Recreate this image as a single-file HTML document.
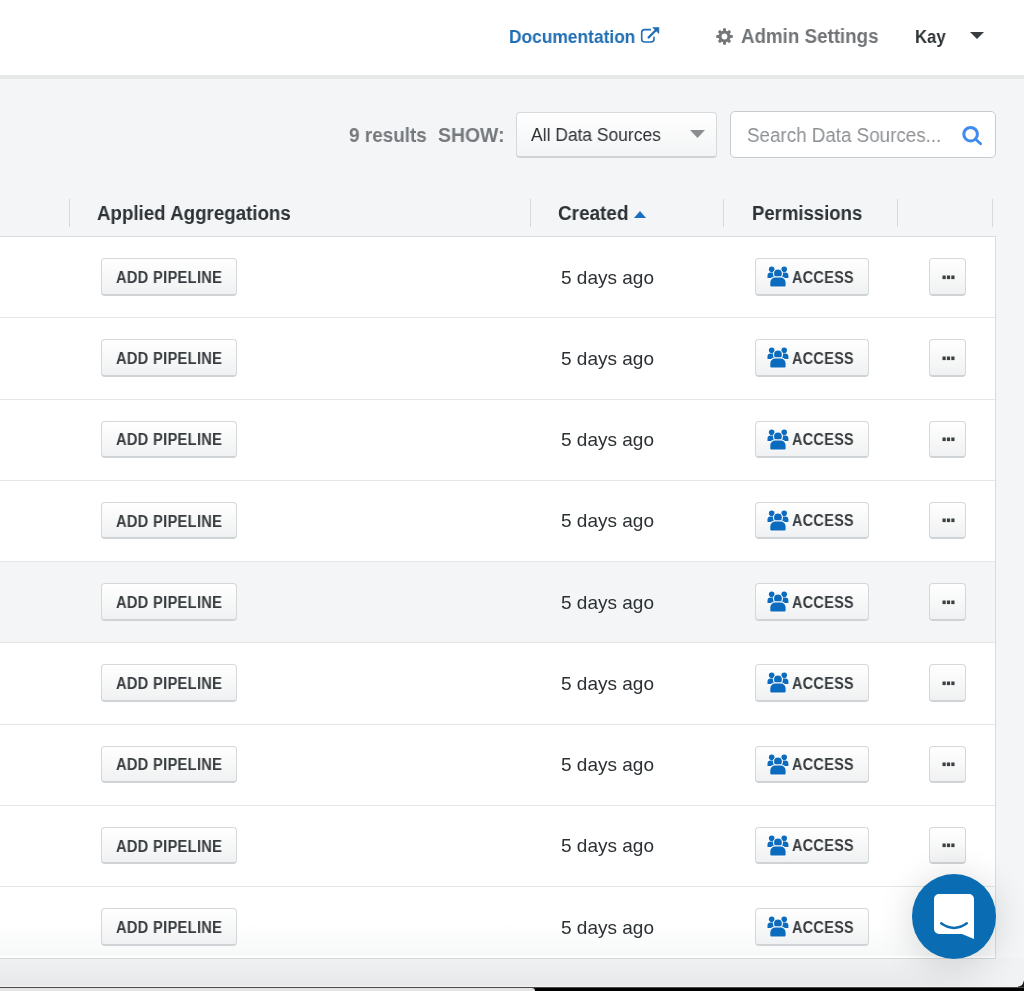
<!DOCTYPE html>
<html><head><meta charset="utf-8">
<style>
*{box-sizing:border-box;margin:0;padding:0}
html,body{width:1024px;height:991px;overflow:hidden}
body{background:#f4f5f7;font-family:"Liberation Sans",sans-serif;position:relative;color:#2c3134}
.a{position:absolute;white-space:nowrap}
#hdr{position:absolute;left:0;top:0;width:1024px;height:75px;background:#fff}
#hdrb{position:absolute;left:0;top:75px;width:1024px;height:4px;background:#e6e8e7}
.t{position:absolute;white-space:nowrap;line-height:20px;transform-origin:0 0;will-change:transform}
.sep{position:absolute;top:199px;width:1px;height:28px;background:#d7dadb}
#tbl{overflow:hidden;position:absolute;left:0;top:236px;width:996px;height:722px;background:#fff;border-top:1px solid #d9dcdd;border-right:1px solid #d9dcdd}
.row{position:absolute;left:0;width:995px;height:81.25px;border-top:1px solid #e5e7e6}
.row.h{background:#f4f5f7}
.btn{position:absolute;height:37.5px;border:1px solid #d4d8da;border-bottom:2px solid #cfd3d5;border-radius:4px;background:linear-gradient(#fff,#f0f1f2);font-weight:700;font-size:15px;color:#363b3e}
.btn span{position:absolute;white-space:nowrap;line-height:15px}
</style></head><body>
<div id="hdr"></div><div id="hdrb"></div>

<!-- nav -->
<div class="t" style="left:508.56px;top:26.9px;font-size:18.4px;font-weight:700;color:#1f6db3;transform:scaleX(0.9439);">Documentation</div>
<svg class="a" style="left:639px;top:26px" width="22" height="20" viewBox="0 0 22 20">
  <path d="M11.9 3.6H5.7a3 3 0 0 0-3 3v6.45a3 3 0 0 0 3 3H12a3 3 0 0 0 3-3V10.8" fill="none" stroke="#1f6db3" stroke-width="1.6"/>
  <path d="M9.6 11.5L17.3 3.8" fill="none" stroke="#1f6db3" stroke-width="2.3" stroke-linecap="round"/>
  <path d="M13.7 1.6h6.2v5.9z" fill="#1f6db3" stroke="#1f6db3" stroke-width="0.6" stroke-linejoin="round"/>
</svg>
<svg class="a" style="left:715.3px;top:27px" width="19" height="19" viewBox="-9.5 -9.5 19 19">
  <g fill="#75787b">
    <circle r="6.1"/>
    <rect x="-1.5" y="-8.3" width="3" height="16.6" rx="0.7"/>
    <rect x="-1.5" y="-8" width="3" height="16" rx="0.7" transform="rotate(45)"/>
    <rect x="-1.5" y="-8.3" width="3" height="16.6" rx="0.7" transform="rotate(90)"/>
    <rect x="-1.5" y="-8" width="3" height="16" rx="0.7" transform="rotate(135)"/>
  </g>
  <circle r="2.9" fill="#fff"/>
</svg>
<div class="t" style="left:740.73px;top:26.0px;font-size:19.4px;font-weight:700;color:#707477;transform:scaleX(0.9667);">Admin Settings</div>
<div class="t" style="left:915.08px;top:26.75px;font-size:18.1px;font-weight:700;color:#2c3134;transform:scaleX(0.9219);">Kay</div>
<svg class="a" style="left:969.5px;top:32px" width="14" height="7" viewBox="0 0 14 7"><path d="M0 0h14L7 7z" fill="#383d41"/></svg>

<!-- toolbar -->
<div class="t" style="left:348.74px;top:124.9px;font-size:19.8px;font-weight:700;color:#75797c;transform:scaleX(0.9562);">9 results</div>
<div class="t" style="left:437.82px;top:124.9px;font-size:19.8px;font-weight:700;color:#75797c;transform:scaleX(0.9815);">SHOW:</div>
<div class="a" style="left:516px;top:112px;width:201px;height:46px;border:1px solid #d6d9db;border-bottom:2px solid #cfd3d5;border-radius:4px;background:linear-gradient(#fff,#f3f4f5)"></div>
<div class="t" style="left:531.2px;top:124.9px;font-size:17.6px;font-weight:400;color:#2c3134;transform:scaleX(0.9908);">All Data Sources</div>
<svg class="a" style="left:690px;top:130px" width="15" height="8" viewBox="0 0 15 8"><path d="M0 0h15L7.5 8z" fill="#8b8e91"/></svg>
<div class="a" style="left:730px;top:111px;width:266px;height:47px;border:1px solid #c9ccce;border-radius:5px;background:#fff"></div>
<div class="t" style="left:746.84px;top:124.8px;font-size:19.6px;font-weight:400;color:#8e9194;transform:scaleX(0.959);">Search Data Sources...</div>
<svg class="a" style="left:961px;top:124px" width="24" height="24" viewBox="0 0 24 24">
  <circle cx="9.6" cy="10.2" r="6.8" fill="none" stroke="#3f8cee" stroke-width="3"/>
  <path d="M14.4 15L19.6 19.8" stroke="#3f8cee" stroke-width="2.8" stroke-linecap="round"/>
</svg>

<!-- table header -->
<div class="sep" style="left:69px"></div>
<div class="sep" style="left:530px"></div>
<div class="sep" style="left:723px"></div>
<div class="sep" style="left:897px"></div>
<div class="sep" style="left:992px"></div>
<div class="t" style="left:97.24px;top:203.2px;font-size:19.5px;font-weight:700;color:#2c3134;transform:scaleX(0.96);">Applied Aggregations</div>
<div class="t" style="left:558.33px;top:203.3px;font-size:19.5px;font-weight:700;color:#2c3134;transform:scaleX(0.9704);">Created</div>
<svg class="a" style="left:634px;top:211px" width="12" height="7" viewBox="0 0 12 7"><path d="M0 7h12L6 0z" fill="#1a6fc0"/></svg>
<div class="t" style="left:751.85px;top:203.3px;font-size:19.5px;font-weight:700;color:#2c3134;transform:scaleX(0.95);">Permissions</div>

<div id="tbl">
<div class="row" style="top:0px;border-top:none;">
<div class="btn" style="left:101px;top:21px;width:136px"></div>
<div class="t" style="left:116.0px;top:30.8px;font-size:15.6px;letter-spacing:0.3px;font-weight:700;color:#373c3f;transform:scaleX(0.942);">ADD PIPELINE</div>
<div class="t" style="left:561.3px;top:30.7px;font-size:19.0px;font-weight:400;color:#2b3033;transform:scaleX(0.9978);">5 days ago</div>
<div class="btn" style="left:755px;top:21px;width:114px"><svg class="a" style="left:11px;top:7px" width="23" height="22" viewBox="0 0 23 22">
<g fill="#0b6bbf">
<circle cx="4.7" cy="3.3" r="2.8"/><circle cx="17.2" cy="3.3" r="2.8"/>
<path d="M0.5 12.1V9.6c0-1.9 1.2-3.1 3-3.1h2.8c1.8 0 3 1.2 3 3.1v2.5z"/>
<path d="M21.4 12.1V9.6c0-1.9-1.2-3.1-3-3.1h-2.8c-1.8 0-3 1.2-3 3.1v2.5z"/>
</g>
<g fill="#0b6bbf" stroke="#f9f9fa" stroke-width="1.2">
<circle cx="10.95" cy="7.5" r="4.5"/>
<path d="M2.7 19.6V16.5a5.5 5.6 0 0 1 5.5-5.6h5.5a5.5 5.6 0 0 1 5.5 5.6v3.1a1.5 1.5 0 0 1-1.5 1.5H4.2a1.5 1.5 0 0 1-1.5-1.5z"/>
</g></svg></div>
<div class="t" style="left:791.6px;top:30.6px;font-size:15.6px;letter-spacing:0.3px;font-weight:700;color:#373c3f;transform:scaleX(0.9273);">ACCESS</div>
<div class="btn" style="left:929px;top:21px;width:37px"><svg class="a" style="left:11.5px;top:15.5px" width="13" height="5" viewBox="0 0 13 5"><g fill="#3a3f42"><rect x="0.5" y="0.5" width="3.2" height="3.6"/><rect x="4.9" y="0.5" width="3.2" height="3.6"/><rect x="9.3" y="0.5" width="3.2" height="3.6"/></g></svg></div>
</div>
<div class="row" style="top:80.25px;">
<div class="btn" style="left:101px;top:21px;width:136px"></div>
<div class="t" style="left:116.0px;top:30.8px;font-size:15.6px;letter-spacing:0.3px;font-weight:700;color:#373c3f;transform:scaleX(0.942);">ADD PIPELINE</div>
<div class="t" style="left:561.3px;top:30.7px;font-size:19.0px;font-weight:400;color:#2b3033;transform:scaleX(0.9978);">5 days ago</div>
<div class="btn" style="left:755px;top:21px;width:114px"><svg class="a" style="left:11px;top:7px" width="23" height="22" viewBox="0 0 23 22">
<g fill="#0b6bbf">
<circle cx="4.7" cy="3.3" r="2.8"/><circle cx="17.2" cy="3.3" r="2.8"/>
<path d="M0.5 12.1V9.6c0-1.9 1.2-3.1 3-3.1h2.8c1.8 0 3 1.2 3 3.1v2.5z"/>
<path d="M21.4 12.1V9.6c0-1.9-1.2-3.1-3-3.1h-2.8c-1.8 0-3 1.2-3 3.1v2.5z"/>
</g>
<g fill="#0b6bbf" stroke="#f9f9fa" stroke-width="1.2">
<circle cx="10.95" cy="7.5" r="4.5"/>
<path d="M2.7 19.6V16.5a5.5 5.6 0 0 1 5.5-5.6h5.5a5.5 5.6 0 0 1 5.5 5.6v3.1a1.5 1.5 0 0 1-1.5 1.5H4.2a1.5 1.5 0 0 1-1.5-1.5z"/>
</g></svg></div>
<div class="t" style="left:791.6px;top:30.6px;font-size:15.6px;letter-spacing:0.3px;font-weight:700;color:#373c3f;transform:scaleX(0.9273);">ACCESS</div>
<div class="btn" style="left:929px;top:21px;width:37px"><svg class="a" style="left:11.5px;top:15.5px" width="13" height="5" viewBox="0 0 13 5"><g fill="#3a3f42"><rect x="0.5" y="0.5" width="3.2" height="3.6"/><rect x="4.9" y="0.5" width="3.2" height="3.6"/><rect x="9.3" y="0.5" width="3.2" height="3.6"/></g></svg></div>
</div>
<div class="row" style="top:161.5px;">
<div class="btn" style="left:101px;top:21px;width:136px"></div>
<div class="t" style="left:116.0px;top:30.8px;font-size:15.6px;letter-spacing:0.3px;font-weight:700;color:#373c3f;transform:scaleX(0.942);">ADD PIPELINE</div>
<div class="t" style="left:561.3px;top:30.7px;font-size:19.0px;font-weight:400;color:#2b3033;transform:scaleX(0.9978);">5 days ago</div>
<div class="btn" style="left:755px;top:21px;width:114px"><svg class="a" style="left:11px;top:7px" width="23" height="22" viewBox="0 0 23 22">
<g fill="#0b6bbf">
<circle cx="4.7" cy="3.3" r="2.8"/><circle cx="17.2" cy="3.3" r="2.8"/>
<path d="M0.5 12.1V9.6c0-1.9 1.2-3.1 3-3.1h2.8c1.8 0 3 1.2 3 3.1v2.5z"/>
<path d="M21.4 12.1V9.6c0-1.9-1.2-3.1-3-3.1h-2.8c-1.8 0-3 1.2-3 3.1v2.5z"/>
</g>
<g fill="#0b6bbf" stroke="#f9f9fa" stroke-width="1.2">
<circle cx="10.95" cy="7.5" r="4.5"/>
<path d="M2.7 19.6V16.5a5.5 5.6 0 0 1 5.5-5.6h5.5a5.5 5.6 0 0 1 5.5 5.6v3.1a1.5 1.5 0 0 1-1.5 1.5H4.2a1.5 1.5 0 0 1-1.5-1.5z"/>
</g></svg></div>
<div class="t" style="left:791.6px;top:30.6px;font-size:15.6px;letter-spacing:0.3px;font-weight:700;color:#373c3f;transform:scaleX(0.9273);">ACCESS</div>
<div class="btn" style="left:929px;top:21px;width:37px"><svg class="a" style="left:11.5px;top:15.5px" width="13" height="5" viewBox="0 0 13 5"><g fill="#3a3f42"><rect x="0.5" y="0.5" width="3.2" height="3.6"/><rect x="4.9" y="0.5" width="3.2" height="3.6"/><rect x="9.3" y="0.5" width="3.2" height="3.6"/></g></svg></div>
</div>
<div class="row" style="top:242.75px;">
<div class="btn" style="left:101px;top:21px;width:136px"></div>
<div class="t" style="left:116.0px;top:30.8px;font-size:15.6px;letter-spacing:0.3px;font-weight:700;color:#373c3f;transform:scaleX(0.942);">ADD PIPELINE</div>
<div class="t" style="left:561.3px;top:30.7px;font-size:19.0px;font-weight:400;color:#2b3033;transform:scaleX(0.9978);">5 days ago</div>
<div class="btn" style="left:755px;top:21px;width:114px"><svg class="a" style="left:11px;top:7px" width="23" height="22" viewBox="0 0 23 22">
<g fill="#0b6bbf">
<circle cx="4.7" cy="3.3" r="2.8"/><circle cx="17.2" cy="3.3" r="2.8"/>
<path d="M0.5 12.1V9.6c0-1.9 1.2-3.1 3-3.1h2.8c1.8 0 3 1.2 3 3.1v2.5z"/>
<path d="M21.4 12.1V9.6c0-1.9-1.2-3.1-3-3.1h-2.8c-1.8 0-3 1.2-3 3.1v2.5z"/>
</g>
<g fill="#0b6bbf" stroke="#f9f9fa" stroke-width="1.2">
<circle cx="10.95" cy="7.5" r="4.5"/>
<path d="M2.7 19.6V16.5a5.5 5.6 0 0 1 5.5-5.6h5.5a5.5 5.6 0 0 1 5.5 5.6v3.1a1.5 1.5 0 0 1-1.5 1.5H4.2a1.5 1.5 0 0 1-1.5-1.5z"/>
</g></svg></div>
<div class="t" style="left:791.6px;top:30.6px;font-size:15.6px;letter-spacing:0.3px;font-weight:700;color:#373c3f;transform:scaleX(0.9273);">ACCESS</div>
<div class="btn" style="left:929px;top:21px;width:37px"><svg class="a" style="left:11.5px;top:15.5px" width="13" height="5" viewBox="0 0 13 5"><g fill="#3a3f42"><rect x="0.5" y="0.5" width="3.2" height="3.6"/><rect x="4.9" y="0.5" width="3.2" height="3.6"/><rect x="9.3" y="0.5" width="3.2" height="3.6"/></g></svg></div>
</div>
<div class="row h" style="top:324.0px;">
<div class="btn" style="left:101px;top:21px;width:136px"></div>
<div class="t" style="left:116.0px;top:30.8px;font-size:15.6px;letter-spacing:0.3px;font-weight:700;color:#373c3f;transform:scaleX(0.942);">ADD PIPELINE</div>
<div class="t" style="left:561.3px;top:30.7px;font-size:19.0px;font-weight:400;color:#2b3033;transform:scaleX(0.9978);">5 days ago</div>
<div class="btn" style="left:755px;top:21px;width:114px"><svg class="a" style="left:11px;top:7px" width="23" height="22" viewBox="0 0 23 22">
<g fill="#0b6bbf">
<circle cx="4.7" cy="3.3" r="2.8"/><circle cx="17.2" cy="3.3" r="2.8"/>
<path d="M0.5 12.1V9.6c0-1.9 1.2-3.1 3-3.1h2.8c1.8 0 3 1.2 3 3.1v2.5z"/>
<path d="M21.4 12.1V9.6c0-1.9-1.2-3.1-3-3.1h-2.8c-1.8 0-3 1.2-3 3.1v2.5z"/>
</g>
<g fill="#0b6bbf" stroke="#f9f9fa" stroke-width="1.2">
<circle cx="10.95" cy="7.5" r="4.5"/>
<path d="M2.7 19.6V16.5a5.5 5.6 0 0 1 5.5-5.6h5.5a5.5 5.6 0 0 1 5.5 5.6v3.1a1.5 1.5 0 0 1-1.5 1.5H4.2a1.5 1.5 0 0 1-1.5-1.5z"/>
</g></svg></div>
<div class="t" style="left:791.6px;top:30.6px;font-size:15.6px;letter-spacing:0.3px;font-weight:700;color:#373c3f;transform:scaleX(0.9273);">ACCESS</div>
<div class="btn" style="left:929px;top:21px;width:37px"><svg class="a" style="left:11.5px;top:15.5px" width="13" height="5" viewBox="0 0 13 5"><g fill="#3a3f42"><rect x="0.5" y="0.5" width="3.2" height="3.6"/><rect x="4.9" y="0.5" width="3.2" height="3.6"/><rect x="9.3" y="0.5" width="3.2" height="3.6"/></g></svg></div>
</div>
<div class="row" style="top:405.25px;">
<div class="btn" style="left:101px;top:21px;width:136px"></div>
<div class="t" style="left:116.0px;top:30.8px;font-size:15.6px;letter-spacing:0.3px;font-weight:700;color:#373c3f;transform:scaleX(0.942);">ADD PIPELINE</div>
<div class="t" style="left:561.3px;top:30.7px;font-size:19.0px;font-weight:400;color:#2b3033;transform:scaleX(0.9978);">5 days ago</div>
<div class="btn" style="left:755px;top:21px;width:114px"><svg class="a" style="left:11px;top:7px" width="23" height="22" viewBox="0 0 23 22">
<g fill="#0b6bbf">
<circle cx="4.7" cy="3.3" r="2.8"/><circle cx="17.2" cy="3.3" r="2.8"/>
<path d="M0.5 12.1V9.6c0-1.9 1.2-3.1 3-3.1h2.8c1.8 0 3 1.2 3 3.1v2.5z"/>
<path d="M21.4 12.1V9.6c0-1.9-1.2-3.1-3-3.1h-2.8c-1.8 0-3 1.2-3 3.1v2.5z"/>
</g>
<g fill="#0b6bbf" stroke="#f9f9fa" stroke-width="1.2">
<circle cx="10.95" cy="7.5" r="4.5"/>
<path d="M2.7 19.6V16.5a5.5 5.6 0 0 1 5.5-5.6h5.5a5.5 5.6 0 0 1 5.5 5.6v3.1a1.5 1.5 0 0 1-1.5 1.5H4.2a1.5 1.5 0 0 1-1.5-1.5z"/>
</g></svg></div>
<div class="t" style="left:791.6px;top:30.6px;font-size:15.6px;letter-spacing:0.3px;font-weight:700;color:#373c3f;transform:scaleX(0.9273);">ACCESS</div>
<div class="btn" style="left:929px;top:21px;width:37px"><svg class="a" style="left:11.5px;top:15.5px" width="13" height="5" viewBox="0 0 13 5"><g fill="#3a3f42"><rect x="0.5" y="0.5" width="3.2" height="3.6"/><rect x="4.9" y="0.5" width="3.2" height="3.6"/><rect x="9.3" y="0.5" width="3.2" height="3.6"/></g></svg></div>
</div>
<div class="row" style="top:486.5px;">
<div class="btn" style="left:101px;top:21px;width:136px"></div>
<div class="t" style="left:116.0px;top:30.8px;font-size:15.6px;letter-spacing:0.3px;font-weight:700;color:#373c3f;transform:scaleX(0.942);">ADD PIPELINE</div>
<div class="t" style="left:561.3px;top:30.7px;font-size:19.0px;font-weight:400;color:#2b3033;transform:scaleX(0.9978);">5 days ago</div>
<div class="btn" style="left:755px;top:21px;width:114px"><svg class="a" style="left:11px;top:7px" width="23" height="22" viewBox="0 0 23 22">
<g fill="#0b6bbf">
<circle cx="4.7" cy="3.3" r="2.8"/><circle cx="17.2" cy="3.3" r="2.8"/>
<path d="M0.5 12.1V9.6c0-1.9 1.2-3.1 3-3.1h2.8c1.8 0 3 1.2 3 3.1v2.5z"/>
<path d="M21.4 12.1V9.6c0-1.9-1.2-3.1-3-3.1h-2.8c-1.8 0-3 1.2-3 3.1v2.5z"/>
</g>
<g fill="#0b6bbf" stroke="#f9f9fa" stroke-width="1.2">
<circle cx="10.95" cy="7.5" r="4.5"/>
<path d="M2.7 19.6V16.5a5.5 5.6 0 0 1 5.5-5.6h5.5a5.5 5.6 0 0 1 5.5 5.6v3.1a1.5 1.5 0 0 1-1.5 1.5H4.2a1.5 1.5 0 0 1-1.5-1.5z"/>
</g></svg></div>
<div class="t" style="left:791.6px;top:30.6px;font-size:15.6px;letter-spacing:0.3px;font-weight:700;color:#373c3f;transform:scaleX(0.9273);">ACCESS</div>
<div class="btn" style="left:929px;top:21px;width:37px"><svg class="a" style="left:11.5px;top:15.5px" width="13" height="5" viewBox="0 0 13 5"><g fill="#3a3f42"><rect x="0.5" y="0.5" width="3.2" height="3.6"/><rect x="4.9" y="0.5" width="3.2" height="3.6"/><rect x="9.3" y="0.5" width="3.2" height="3.6"/></g></svg></div>
</div>
<div class="row" style="top:567.75px;">
<div class="btn" style="left:101px;top:21px;width:136px"></div>
<div class="t" style="left:116.0px;top:30.8px;font-size:15.6px;letter-spacing:0.3px;font-weight:700;color:#373c3f;transform:scaleX(0.942);">ADD PIPELINE</div>
<div class="t" style="left:561.3px;top:30.7px;font-size:19.0px;font-weight:400;color:#2b3033;transform:scaleX(0.9978);">5 days ago</div>
<div class="btn" style="left:755px;top:21px;width:114px"><svg class="a" style="left:11px;top:7px" width="23" height="22" viewBox="0 0 23 22">
<g fill="#0b6bbf">
<circle cx="4.7" cy="3.3" r="2.8"/><circle cx="17.2" cy="3.3" r="2.8"/>
<path d="M0.5 12.1V9.6c0-1.9 1.2-3.1 3-3.1h2.8c1.8 0 3 1.2 3 3.1v2.5z"/>
<path d="M21.4 12.1V9.6c0-1.9-1.2-3.1-3-3.1h-2.8c-1.8 0-3 1.2-3 3.1v2.5z"/>
</g>
<g fill="#0b6bbf" stroke="#f9f9fa" stroke-width="1.2">
<circle cx="10.95" cy="7.5" r="4.5"/>
<path d="M2.7 19.6V16.5a5.5 5.6 0 0 1 5.5-5.6h5.5a5.5 5.6 0 0 1 5.5 5.6v3.1a1.5 1.5 0 0 1-1.5 1.5H4.2a1.5 1.5 0 0 1-1.5-1.5z"/>
</g></svg></div>
<div class="t" style="left:791.6px;top:30.6px;font-size:15.6px;letter-spacing:0.3px;font-weight:700;color:#373c3f;transform:scaleX(0.9273);">ACCESS</div>
<div class="btn" style="left:929px;top:21px;width:37px"><svg class="a" style="left:11.5px;top:15.5px" width="13" height="5" viewBox="0 0 13 5"><g fill="#3a3f42"><rect x="0.5" y="0.5" width="3.2" height="3.6"/><rect x="4.9" y="0.5" width="3.2" height="3.6"/><rect x="9.3" y="0.5" width="3.2" height="3.6"/></g></svg></div>
</div>
<div class="row" style="top:649.0px;background:linear-gradient(#fff 35px,#f7f8f8 69px,#fff 69px);">
<div class="btn" style="left:101px;top:21px;width:136px"></div>
<div class="t" style="left:116.0px;top:30.8px;font-size:15.6px;letter-spacing:0.3px;font-weight:700;color:#373c3f;transform:scaleX(0.942);">ADD PIPELINE</div>
<div class="t" style="left:561.3px;top:30.7px;font-size:19.0px;font-weight:400;color:#2b3033;transform:scaleX(0.9978);">5 days ago</div>
<div class="btn" style="left:755px;top:21px;width:114px"><svg class="a" style="left:11px;top:7px" width="23" height="22" viewBox="0 0 23 22">
<g fill="#0b6bbf">
<circle cx="4.7" cy="3.3" r="2.8"/><circle cx="17.2" cy="3.3" r="2.8"/>
<path d="M0.5 12.1V9.6c0-1.9 1.2-3.1 3-3.1h2.8c1.8 0 3 1.2 3 3.1v2.5z"/>
<path d="M21.4 12.1V9.6c0-1.9-1.2-3.1-3-3.1h-2.8c-1.8 0-3 1.2-3 3.1v2.5z"/>
</g>
<g fill="#0b6bbf" stroke="#f9f9fa" stroke-width="1.2">
<circle cx="10.95" cy="7.5" r="4.5"/>
<path d="M2.7 19.6V16.5a5.5 5.6 0 0 1 5.5-5.6h5.5a5.5 5.6 0 0 1 5.5 5.6v3.1a1.5 1.5 0 0 1-1.5 1.5H4.2a1.5 1.5 0 0 1-1.5-1.5z"/>
</g></svg></div>
<div class="t" style="left:791.6px;top:30.6px;font-size:15.6px;letter-spacing:0.3px;font-weight:700;color:#373c3f;transform:scaleX(0.9273);">ACCESS</div>
<div class="btn" style="left:929px;top:21px;width:37px"><svg class="a" style="left:11.5px;top:15.5px" width="13" height="5" viewBox="0 0 13 5"><g fill="#3a3f42"><rect x="0.5" y="0.5" width="3.2" height="3.6"/><rect x="4.9" y="0.5" width="3.2" height="3.6"/><rect x="9.3" y="0.5" width="3.2" height="3.6"/></g></svg></div>
</div>
</div>

<!-- bottom -->
<div class="a" style="left:0;top:958px;width:1024px;height:29px;background:linear-gradient(to right,rgba(244,245,247,0) 940px,#f1f2f3 1010px),linear-gradient(#f0f1f3,#e8e9ea 92%,#eeeeee)"></div>
<div class="a" style="left:0;top:958px;width:996px;height:1px;background:#d6d9da"></div>
<div class="a" style="left:0;top:986px;width:1024px;height:1px;background:#f2f2f2"></div>
<div class="a" style="left:0;top:987px;width:1024px;height:1px;background:#4a4a4a"></div>
<div class="a" style="left:0;top:988px;width:1024px;height:3px;background:#000"></div>
<div class="a" style="left:0;top:988px;width:535px;height:3px;background:#e4e4e4;border-top-right-radius:5px"></div>
<div class="a" style="left:1018px;top:981px;width:6px;height:6px;background:radial-gradient(circle at 0 0,transparent 5px,#1a1a1a 6px)"></div>

<!-- chat -->
<div class="a" style="left:912px;top:874px;width:84px;height:84.5px;border-radius:50%;background:#0a6db4;box-shadow:0 4px 36px rgba(0,0,0,.16)"></div>
<svg class="a" style="left:933px;top:893px" width="42" height="47" viewBox="0 0 42 47">
  <path d="M6 1h30a5 5 0 0 1 5 5v40l-12-5H6a5 5 0 0 1-5-5V6a5 5 0 0 1 5-5z" fill="#fff"/>
  <path d="M8.2 30.3Q21 39.6 33.8 30.3" fill="none" stroke="#0a6db4" stroke-width="2.5" stroke-linecap="round"/>
</svg>
</body></html>
